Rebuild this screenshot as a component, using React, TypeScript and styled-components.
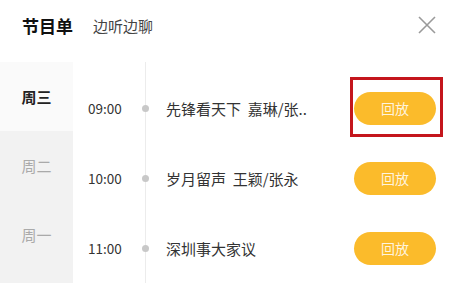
import { FC } from "react";
import styled, { createGlobalStyle, css } from "styled-components";

const GlobalStyle = createGlobalStyle`
  html, body {
    margin: 0;
    padding: 0;
    background: #ffffff;
    font-family: "Noto Sans CJK SC", "Noto Sans", sans-serif;
  }
`;

type Program = {
  time: string;
  title: string;
  highlighted?: boolean;
};

const days = ["周三", "周二", "周一"];

const programs: Program[] = [
  { time: "09:00", title: "先锋看天下  嘉琳/张..", highlighted: true },
  { time: "10:00", title: "岁月留声  王颖/张永" },
  { time: "11:00", title: "深圳事大家议" },
];

const CloseIcon: FC = () => (
  <svg width="18" height="18" viewBox="0 0 18 18" fill="none">
    <path d="M1 1L17 17M17 1L1 17" stroke="#9a9a9a" strokeWidth="1.6" />
  </svg>
);

export default function App() {
  return (
    <>
      <GlobalStyle />
      <Page>
        <Header>
          <Title>节目单</Title>
          <SubTitle>边听边聊</SubTitle>
          <CloseButton type="button">
            <CloseIcon />
          </CloseButton>
        </Header>
        <Body>
          <DayList>
            {days.map((d, i) => (
              <DayItem key={d} $active={i === 0}>
                {d}
              </DayItem>
            ))}
          </DayList>
          <Schedule>
            {programs.map((p) => (
              <Row key={p.time}>
                <Time>{p.time}</Time>
                <Dot />
                <ProgramTitle>{p.title}</ProgramTitle>
                <ButtonWrap>
                  <ReplayButton type="button">回放</ReplayButton>
                  {p.highlighted && <Marker />}
                </ButtonWrap>
              </Row>
            ))}
          </Schedule>
        </Body>
      </Page>
    </>
  );
}

const Page = styled.div`
  width: 455px;
  height: 283px;
  overflow: hidden;
  display: flex;
  flex-direction: column;
  background: #fff;
`;

const Header = styled.div`
  height: 50px;
  margin-bottom: 12px;
  display: flex;
  align-items: center;
  padding: 0 19px 0 22px;
`;

const Title = styled.div`
  font-size: 17px;
  font-weight: 700;
  color: #111;
`;

const SubTitle = styled.div`
  margin-left: 20px;
  font-size: 15px;
  color: #444;
`;

const CloseButton = styled.button`
  margin-left: auto;
  border: none;
  background: transparent;
  padding: 0;
  display: flex;
  cursor: pointer;
`;

const Body = styled.div`
  flex: 1;
  display: flex;
`;

const DayList = styled.div`
  width: 73px;
  background: #f2f2f2;
`;

const DayItem = styled.div<{ $active: boolean }>(
  ({ $active }) => css`
    height: 69px;
    display: flex;
    align-items: center;
    justify-content: center;
    font-size: 15px;
    color: #aaaaaa;

    ${$active &&
    css`
      background: #fafafa;
      color: #222;
      font-weight: 700;
    `}
  `
);

const Schedule = styled.div`
  flex: 1;
  position: relative;
  padding-top: 11px;

  &::before {
    content: "";
    position: absolute;
    top: 0;
    bottom: 0;
    left: 72px;
    width: 1px;
    background: #ececec;
  }
`;

const Row = styled.div`
  height: 70px;
  display: flex;
  align-items: center;
  padding: 0 19px 0 15px;
`;

const Time = styled.div`
  width: 54px;
  font-size: 13.5px;
  color: #333;
`;

const Dot = styled.span`
  position: relative;
  width: 7px;
  height: 7px;
  border-radius: 50%;
  background: #c8c8c8;
`;

const ProgramTitle = styled.div`
  flex: 1;
  margin-left: 17px;
  font-size: 15px;
  color: #333;
  white-space: pre;
`;

const ButtonWrap = styled.div`
  position: relative;
  display: flex;
`;

const ReplayButton = styled.button`
  width: 82px;
  height: 33px;
  border: none;
  border-radius: 17px;
  background: #fbbb2b;
  color: rgba(255, 255, 255, 0.85);
  font-family: "Noto Sans CJK SC", sans-serif;
  font-size: 14px;
  cursor: pointer;
`;

const Marker = styled.span`
  position: absolute;
  top: -15px;
  bottom: -12px;
  left: -4px;
  right: -7px;
  border: 3px solid #c4161c;
  pointer-events: none;
`;
